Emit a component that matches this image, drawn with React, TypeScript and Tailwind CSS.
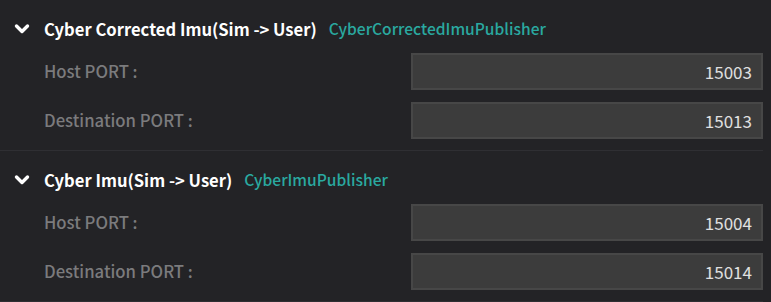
interface Port {
  label: string;
  value: string;
}

interface Section {
  title: string;
  publisher: string;
  ports: Port[];
}

const sections: Section[] = [
  {
    title: "Cyber Corrected Imu(Sim -> User)",
    publisher: "CyberCorrectedImuPublisher",
    ports: [
      { label: "Host PORT :", value: "15003" },
      { label: "Destination PORT :", value: "15013" },
    ],
  },
  {
    title: "Cyber Imu(Sim -> User)",
    publisher: "CyberImuPublisher",
    ports: [
      { label: "Host PORT :", value: "15004" },
      { label: "Destination PORT :", value: "15014" },
    ],
  },
];

const font = { fontFamily: '"Noto Sans CJK KR", "Noto Sans", sans-serif' };

const Chevron = () => (
  <svg width="16" height="12" viewBox="0 0 16 12" className="ml-[14px] mr-[14px]">
    <polyline points="2.5,3 8,8.5 13.5,3" fill="none" stroke="#fff" strokeWidth="3.4" strokeLinecap="round" strokeLinejoin="round" />
  </svg>
);

export default function App() {
  return (
    <div className="w-[771px] h-[302px] bg-[#232326] overflow-hidden" style={font}>
      {sections.map((s) => (
        <div key={s.title} className="mr-2 border-b border-[#2f2f33]">
          <div className="flex items-center h-[44px] pt-[14px]">
            <Chevron />
            <span className="text-[16.6px] font-bold text-white">{s.title}</span>
            <span className="ml-[12px] text-[15.6px] font-medium text-[#2aa9a0]">{s.publisher}</span>
          </div>
          <div className="flex flex-col gap-[12px] pt-[9px] pb-[11px]">
            {s.ports.map((p) => (
              <div key={p.label} className="flex items-center">
                <span className="pl-[44px] w-[411px] text-[16.7px] font-medium text-[#7b7b7d]">{p.label}</span>
                <div className="flex-1 h-[37px] bg-[#3c3c3c] border-2 border-[#474747] flex items-center justify-end pr-[9px] text-[17px] text-[#e0e0e0]">
                  {p.value}
                </div>
              </div>
            ))}
          </div>
        </div>
      ))}
    </div>
  );
}
